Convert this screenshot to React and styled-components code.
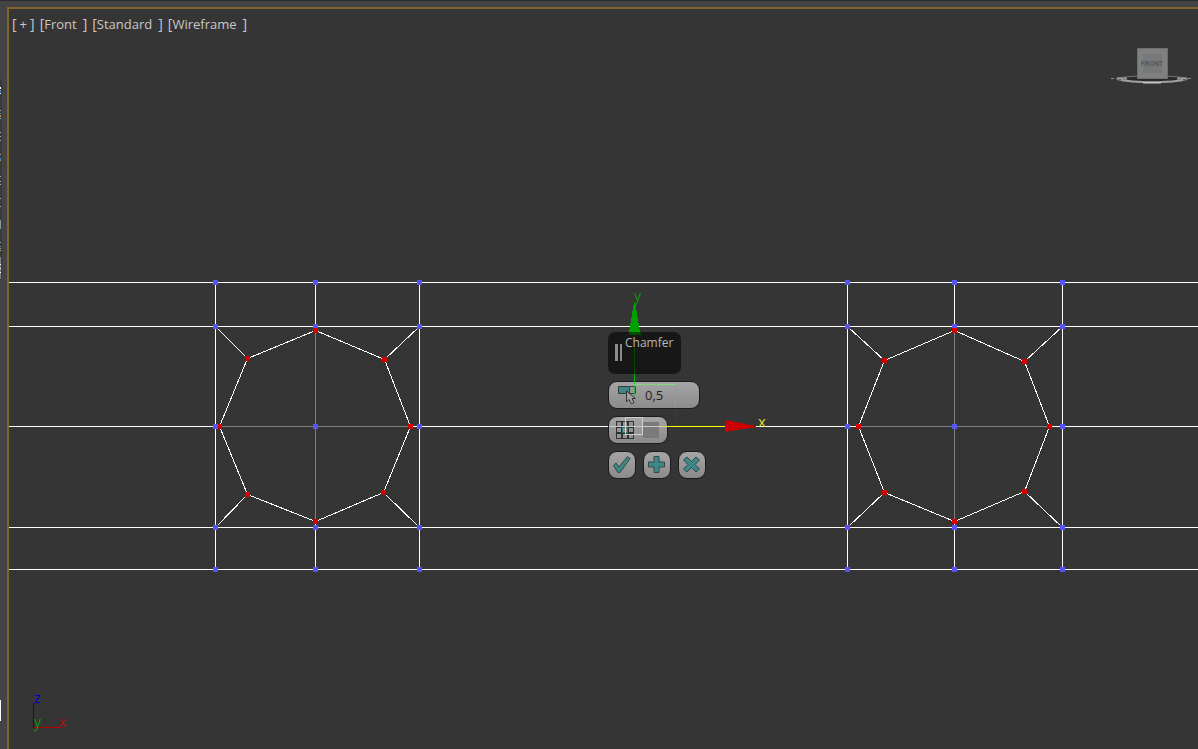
import React from "react";
import styled, { createGlobalStyle } from "styled-components";

const GlobalStyle = createGlobalStyle`
  * { box-sizing: border-box; }
  html, body { margin: 0; background: #444444; overflow: hidden; }
  button, input { font-family: inherit; }
`;

const Shell = styled.main`
  display: flex;
  height: 100vh;
  border-top: 1px solid #2b2b2b;
  background: #444444;
  font-family: "Open Sans", "Noto Sans", sans-serif;
`;

const Rail = styled.aside`
  flex: 0 0 7px;
`;

const RailMarks = styled.svg`
  display: block;
  width: 7px;
  height: 100%;
`;

const Viewport = styled.section`
  position: relative;
  flex: 1;
  min-width: 0;
  margin-top: 6px;
  border: 2px solid #7f6628;
  border-right: 0;
  border-bottom: 0;
  background: #353535;
  overflow: hidden;
`;

const Canvas = styled.svg`
  position: absolute;
  inset: 0;
  width: 100%;
  height: 100%;
  pointer-events: none;
  shape-rendering: crispEdges;
`;

const Menus = styled.nav`
  position: relative;
  display: flex;
  gap: 5px;
  padding: 5px 3px;
`;

const MenuButton = styled.button`
  display: flex;
  gap: ${(p) => (p.$wide ? 3 : 0)}px;
  padding: 0;
  border: 0;
  background: none;
  color: #c8c8c8;
  font-size: 14px;
  line-height: 20px;
`;

const MenuText = styled.span`
  padding-right: ${(p) => (p.$wide ? 0 : 6)}px;
  font-size: 13px;
`;

const Cube = styled.svg`
  position: absolute;
  top: 38px;
  right: 3px;
  width: 86px;
  height: 42px;
`;

const Tripod = styled.svg`
  position: absolute;
  left: 20px;
  bottom: 12px;
  width: 48px;
  height: 56px;
`;

const Caddy = styled.form`
  position: absolute;
  left: 599px;
  top: 323px;
  display: flex;
  flex-direction: column;
  align-items: flex-start;
  gap: 7px;
`;

const CaddyTitle = styled.header`
  display: flex;
  gap: 3px;
  width: 73px;
  height: 42px;
  padding: 2px 7px;
  border-radius: 7px;
  background: #171717;
  color: #b8b8b8;
  font-size: 12px;
  line-height: 17px;
`;

const Grip = styled.span`
  width: 7px;
  height: 17px;
  margin-top: 10px;
  border: solid #8c8c8c;
  border-width: 0 2px 0 3px;
`;

const face = `
  height: 28px;
  border: 1px solid #1c1c1c;
  border-radius: 9px;
  background: linear-gradient(#a5a5a5, #8b8b8b);
`;

const Field = styled.label`
  ${face}
  display: flex;
  align-items: center;
  gap: ${(p) => p.$gap}px;
  width: ${(p) => p.$width}px;
  padding-left: ${(p) => p.$pad}px;
`;

const Amount = styled.input`
  width: 44px;
  padding: 0;
  border: 0;
  outline: 0;
  background: none;
  color: #1e1e1e;
  font-size: 13px;
  line-height: 18px;
`;

const Tick = styled.input`
  appearance: none;
  width: 16px;
  height: 16px;
  margin: 0;
  background: #7a7a7a;
`;

const Actions = styled.div`
  display: flex;
  gap: 7px;
`;

const ActionButton = styled.button`
  ${face}
  display: grid;
  place-items: center;
  width: 28px;
  padding: 0;
`;

const Icon = styled.svg`
  display: block;
  flex: none;
`;

const railMarks = [
  [87, 2, "#ffffff"], [90, 2, "#3f8fd0"], [93, 1, "#ffffff"],
  [110, 1, "#b0b0b0"], [113, 1, "#4a7fae"], [115, 2, "#b88a5c"], [118, 1, "#aaaaaa"],
  [132, 1, "#aaaaaa"], [136, 1, "#aaaaaa"], [140, 1, "#aaaaaa"],
  [154, 1, "#aaaaaa"], [158, 2, "#4a7fae"], [160, 1, "#b88a5c"],
  [176, 1, "#aaaaaa"], [181, 1, "#aaaaaa"], [184, 1, "#aaaaaa"],
  [198, 1, "#aaaaaa"], [206, 1, "#aaaaaa"], [220, 9, "#86a095"],
  [242, 1, "#aaaaaa"], [246, 1, "#4a7fae"], [248, 1, "#b88a5c"], [250, 1, "#aaaaaa"],
  [257, 22, "#808080"], [264, 1, "#ffffff"], [268, 1, "#ffffff"], [272, 1, "#ffffff"],
  [700, 21, "#ffffff"],
];

const rows = [282, 326, 426, 527, 569];

const wheels = [
  {
    columns: [215, 315, 419],
    rim: [[315, 330], [384, 359], [410, 426], [383, 492], [315, 521], [247, 494], [219, 426], [247, 358]],
  },
  {
    columns: [847, 954, 1062],
    rim: [[954, 330], [1024, 361], [1049, 426], [1024, 491], [954, 521], [884, 492], [858, 426], [884, 360]],
  },
];

function Vertex({ x, y, color }) {
  return <rect x={x - 2} y={y - 2} width="5" height="5" fill={color} />;
}

function Wheel({ columns, rim }) {
  const [left, mid, right] = columns;
  const [top, ne, east, se, bottom, sw, west, nw] = rim;
  const spokes = [[left, 326, nw], [right, 326, ne], [left, 527, sw], [right, 527, se]];
  return (
    <g>
      <g fill="none" stroke="#ffffff" transform="translate(0.5 0.5)">
        {columns.map((x) => <path key={x} d={`M${x} 282V569`} />)}
        <path d={`M${mid} ${top[1]}V${bottom[1]}M${west[0]} 426H${east[0]}`} stroke="#808080" />
        <polygon points={rim.map((p) => p.join()).join(" ")} />
        {spokes.map(([x, y, p]) => <path key={`${x}-${y}`} d={`M${x} ${y}L${p[0]} ${p[1]}`} />)}
      </g>
      {rim.map(([x, y]) => <Vertex key={`${x}-${y}`} x={x} y={y} color="#d40000" />)}
      {columns.flatMap((x) => rows.map((y) => <Vertex key={`${x}-${y}`} x={x} y={y} color="#5555f5" />))}
      <Vertex x={top[0]} y={top[1]} color="#d40000" />
    </g>
  );
}

function Scene() {
  return (
    <Canvas aria-label="Wireframe">
      <g transform="translate(-9 -9)">
        {rows.map((y) => <rect key={y} x="9" y={y} width="100%" height="1" fill="#ffffff" />)}
        {wheels.map((w) => <Wheel key={w.columns[0]} {...w} />)}
      </g>
    </Canvas>
  );
}

function Gizmo() {
  return (
    <Canvas aria-hidden="true">
      <g transform="translate(-9 -9)">
        <path d="M634 302h1L640 332H629Z" fill="#00a000" />
        <rect x="629" y="332" width="12" height="3" fill="#004b00" />
        <rect x="634" y="348" width="1" height="26" fill="#004b00" />
        <rect x="634" y="374" width="1" height="8" fill="#00b400" />
        <rect x="634" y="382" width="1" height="14" fill="#3fae4f" />
        <rect x="634" y="384" width="42" height="1" fill="#7ed67e" />
        <rect x="675" y="385" width="1" height="23" fill="#c98484" />
        <rect x="675" y="409" width="1" height="17" fill="#c00000" />
        <path d="M625.5 417.5H642.5V434.5H625.5Z" fill="none" stroke="#d0d0d0" />
        <rect x="609" y="426" width="50" height="1" fill="#cccccc" />
        <rect x="659" y="426" width="8" height="1" fill="#dddd76" />
        <rect x="667" y="426" width="58" height="1" fill="#ffff00" />
        <path d="M725 420L756 426V427L725 432Z" fill="#cc0000" />
        <text x="634" y="301" fill="#149014" fontSize="14">y</text>
        <text x="758" y="427" fill="#dcdc28" fontSize="15">x</text>
      </g>
    </Canvas>
  );
}

function ViewCube() {
  return (
    <Cube viewBox="0 0 86 42" role="img" aria-label="View cube">
      <path d="M2 31.500H5M79 31.500H82" stroke="#8c8c8c" />
      <ellipse cx="43" cy="32" rx="36" ry="3" fill="#292929" stroke="#747474" />
      <path d="M8 31.500H18M68 31.500H78" stroke="#9a9a9a" strokeWidth="2" />
      <path d="M12 33Q24 35 34 35M52 35Q64 35 74 33" fill="none" stroke="#a0a0a0" strokeWidth="2" />
      <path d="M34 35.500H52" stroke="#c4c4c8" strokeWidth="2" />
      <rect x="28.500" y="1.500" width="30" height="30" fill="#808080" stroke="#6e6e6e" />
      <rect x="34" y="7" width="19" height="19" fill="#777879" />
      <text x="43" y="19" textAnchor="middle" fill="#54575c" fontSize="7" fontWeight="600" fontFamily="Roboto, Liberation Sans, sans-serif">FRONT</text>
    </Cube>
  );
}

function AxisTripod() {
  return (
    <Tripod viewBox="0 0 48 56" role="img" aria-label="World axis">
      <rect x="4" y="22" width="1" height="25" fill="#0000c8" />
      <rect x="5" y="46" width="27" height="1" fill="#b40000" />
      <text x="5" y="22" fill="#0000d0" fontSize="14">z</text>
      <text x="5" y="46" fill="#149014" fontSize="14">y</text>
      <text x="30" y="46" fill="#b01010" fontSize="14">x</text>
    </Tripod>
  );
}

function AmountIcon() {
  return (
    <Icon width="19" height="20" viewBox="0 1 19 20" aria-hidden="true">
      <path d="M.5 2.500H11.500V9.500H.5Z" fill="#3f8585" stroke="#353b3b" />
      <path d="M11.500 2.500H17.500V9.500H11.500Z" fill="#969696" stroke="#404040" />
      <path d="M8.500 7V18L11 15.500L13.500 20L16 18.500L14 14.500H17.500Z" fill="#a0a0a0" stroke="#353535" />
    </Icon>
  );
}

function GridIcon() {
  const steps = [0, 6, 12];
  return (
    <Icon width="18" height="18" viewBox="0 0 18 18" aria-hidden="true">
      {steps.flatMap((y) => steps.map((x) => (
        <rect
          key={`${x}-${y}`}
          x={x + 0.5}
          y={y + 0.5}
          width="5"
          height="5"
          fill="#949494"
          stroke={x === 6 && y === 6 ? "#1f7474" : "#303030"}
        />
      )))}
    </Icon>
  );
}

const actionIcons = {
  OK: "M1.500 10.500L4 8L7 12L15.500 1.500L18 3.500L8 17.500H6Z",
  "Apply and continue": "M7 1.500H12V7H17.500V12H12V17.500H7V12H1.500V7H7Z",
  Cancel: "M5 2L9.500 6.500L14 2L17.500 5L13 9.500L17.500 14L14 17L9.500 12.500L5 17L1.500 14L6 9.500L1.500 5Z",
};

const menus = ["+", "Front", "Standard", "Wireframe"];

export default function App() {
  return (
    <>
      <GlobalStyle />
      <Shell>
        <Rail>
          <RailMarks aria-hidden="true">
            <g transform="translate(0 -1)">
              <rect x="0" y="79" width="2" height="201" fill="#3a3a3a" />
              {railMarks.map(([y, h, color]) => <rect key={y} x="0" y={y} width="1" height={h} fill={color} />)}
            </g>
          </RailMarks>
        </Rail>
        <Viewport>
          <Scene />
          <Menus>
            {menus.map((name) => (
              <MenuButton key={name} type="button" $wide={name === "+"}>
                <span>[</span>
                <MenuText $wide={name === "+"}>{name}</MenuText>
                <span>]</span>
              </MenuButton>
            ))}
          </Menus>
          <ViewCube />
          <AxisTripod />
          <Caddy onSubmit={(e) => e.preventDefault()}>
            <CaddyTitle><Grip />Chamfer</CaddyTitle>
            <Field $width={92} $pad={9} $gap={8}>
              <AmountIcon />
              <Amount aria-label="Amount" defaultValue="0,5" />
            </Field>
            <Field $width={60} $pad={7} $gap={9}>
              <GridIcon />
              <Tick type="checkbox" aria-label="Open chamfer" />
            </Field>
            <Actions>
              {Object.entries(actionIcons).map(([label, d]) => (
                <ActionButton key={label} type="button" aria-label={label}>
                  <Icon width="18" height="18" viewBox="1 1 18 18" aria-hidden="true">
                    <path d={d} fill="#3d8787" stroke="#344848" />
                  </Icon>
                </ActionButton>
              ))}
            </Actions>
          </Caddy>
          <Gizmo />
        </Viewport>
      </Shell>
    </>
  );
}
